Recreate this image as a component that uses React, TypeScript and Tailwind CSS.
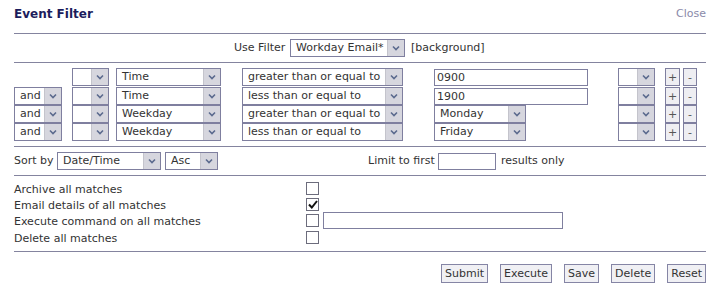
import React from 'react'

const font = { fontFamily: '"DejaVu Sans", Verdana, sans-serif' }

function Chevron() {
  return (
    <svg width="8" height="6" viewBox="0 0 8 6" className="block">
      <path d="M1 1.5 L4 4.5 L7 1.5" fill="none" stroke="#5b6a8e" strokeWidth="1.6" />
    </svg>
  )
}

function Select({ value, w }: { value: string; w: string }) {
  return (
    <div className={`${w} h-[18px] flex border border-[#7f7f9f] bg-white shrink-0`}>
      <div className="flex-1 pl-[5px] leading-[16px] text-[#333] whitespace-nowrap overflow-hidden">{value}</div>
      <div className="w-[17px] bg-[#d6d6de] border-l border-[#c4c4cc] flex items-center justify-center">
        <Chevron />
      </div>
    </div>
  )
}

function Input({ w, value = '' }: { w: string; value?: string }) {
  return (
    <div className={`${w} h-[17px] border border-[#7f7f9f] bg-white pl-[2px] leading-[15px] text-[#333] shrink-0`}>
      {value}
    </div>
  )
}

function Rule() {
  return <div className="h-px bg-[#84849f]" />
}

const rows = [
  { and: false, field: 'Time', op: 'greater than or equal to', value: '0900', kind: 'input' },
  { and: true, field: 'Time', op: 'less than or equal to', value: '1900', kind: 'input' },
  { and: true, field: 'Weekday', op: 'greater than or equal to', value: 'Monday', kind: 'select' },
  { and: true, field: 'Weekday', op: 'less than or equal to', value: 'Friday', kind: 'select' },
]

const actions = ['Archive all matches', 'Email details of all matches', 'Execute command on all matches', 'Delete all matches']

export default function App() {
  return (
    <div className="w-[715px] h-[300px] bg-white pl-[14px] pr-[9px] text-[11px] text-[#333]" style={font}>
      <div className="h-[33px] flex justify-between pt-[6px] leading-[16px]">
        <span className="text-[12px] font-bold text-[#1c1c5c]">Event Filter</span>
        <span className="text-[#8a8aaa]">Close</span>
      </div>
      <Rule />

      <div className="h-[28px] flex items-center">
        <span className="ml-[220px] w-[56px]">Use Filter</span>
        <Select value="Workday Email*" w="w-[115px]" />
        <span className="ml-[6px]">[background]</span>
      </div>
      <Rule />

      <div className="pt-[5px] pb-[5px]">
        {rows.map((r, i) => (
          <div key={i} className={`flex ${i === 0 ? 'mb-px' : ''}`}>
            {r.and ? <Select value="and" w="w-[48px]" /> : <div className="w-[48px] shrink-0" />}
            <div className="ml-[10px]"><Select value="" w="w-[37px]" /></div>
            <div className="ml-[7px]"><Select value={r.field} w="w-[105px]" /></div>
            <div className="ml-[21px]"><Select value={r.op} w="w-[161px]" /></div>
            <div className="ml-[31px] w-[184px] shrink-0 flex items-center">
              {r.kind === 'input' ? <Input w="w-[154px]" value={r.value} /> : <Select value={r.value} w="w-[92px]" />}
            </div>
            <Select value="" w="w-[37px]" />
            <div className="ml-[10px] w-[15px] h-[18px] border border-[#7f7f9f] bg-[#eeeef2] flex items-center justify-center text-[#555] leading-none">+</div>
            <div className="ml-[3px] w-[14px] h-[18px] border border-[#7f7f9f] bg-[#eeeef2] flex items-center justify-center text-[#555] leading-none">-</div>
          </div>
        ))}
      </div>
      <Rule />

      <div className="h-[28px] flex items-center">
        <span className="w-[43px]">Sort by</span>
        <Select value="Date/Time" w="w-[104px]" />
        <div className="ml-[4px]"><Select value="Asc" w="w-[53px]" /></div>
        <span className="ml-[150px] w-[70px]">Limit to first</span>
        <Input w="w-[58px]" />
        <span className="ml-[5px]">results only</span>
      </div>
      <Rule />

      <div className="pt-[4px] pb-[6px]">
        {actions.map((a, i) => (
          <div key={a} className={`flex items-center ${i === 2 ? 'h-[17px]' : 'h-[16px]'}`}>
            <span className="w-[292px] shrink-0 pt-[4px]">{a}</span>
            <div className="w-[13px] h-[13px] border border-[#6c6c7c] bg-white flex items-center justify-center shrink-0">
              {i === 1 && (
                <svg width="10" height="9" viewBox="0 0 10 9">
                  <path d="M1 4.5 L3.8 7.5 L9 1" fill="none" stroke="#111" strokeWidth="2" />
                </svg>
              )}
            </div>
            {i === 2 && <div className="ml-[4px]"><Input w="w-[240px]" /></div>}
          </div>
        ))}
      </div>
      <Rule />

      <div className="pt-[12px] flex justify-end gap-[12px]">
        {['Submit', 'Execute', 'Save', 'Delete', 'Reset'].map((b) => (
          <div key={b} className="h-[19px] px-[3px] border border-[#8585a5] bg-[#f0f0f4] leading-[17px] text-[#333]">{b}</div>
        ))}
      </div>
    </div>
  )
}
